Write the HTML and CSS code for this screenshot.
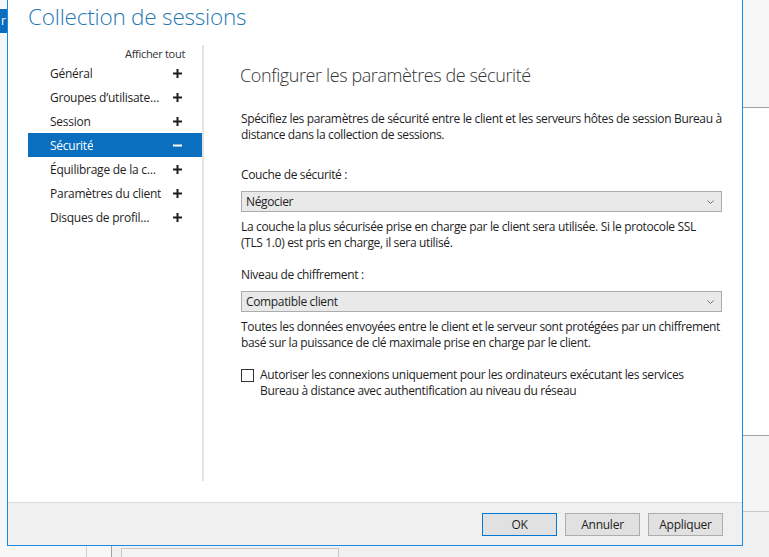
FILE: index.html
```html
<!DOCTYPE html>
<html lang="fr">
<head>
<meta charset="utf-8">
<title>Collection de sessions</title>
<link rel="stylesheet" href="styles.css">
</head>
<body>
<div class="desk">
  <div class="bg-left"><div class="bg-left-tab">r</div></div>
  <div class="dialog">
    <div class="dlg-main">
      <h1 class="title">Collection de sessions</h1>
      <div class="dlg-body">
        <nav class="nav">
          <div class="nav-all">Afficher tout</div>
          <ul class="nav-list">
            <li class="nav-item"><span class="nav-label">Général</span><svg class="ico" width="9" height="9" viewBox="0 0 9 9"><path d="M4.5 0v9M0 4.5h9"/></svg></li>
            <li class="nav-item"><span class="nav-label">Groupes d’utilisate…</span><svg class="ico" width="9" height="9" viewBox="0 0 9 9"><path d="M4.5 0v9M0 4.5h9"/></svg></li>
            <li class="nav-item"><span class="nav-label">Session</span><svg class="ico" width="9" height="9" viewBox="0 0 9 9"><path d="M4.5 0v9M0 4.5h9"/></svg></li>
            <li class="nav-item is-active"><span class="nav-label">Sécurité</span><svg class="ico" width="9" height="9" viewBox="0 0 9 9"><path d="M0 4.5h9"/></svg></li>
            <li class="nav-item"><span class="nav-label">Équilibrage de la c…</span><svg class="ico" width="9" height="9" viewBox="0 0 9 9"><path d="M4.5 0v9M0 4.5h9"/></svg></li>
            <li class="nav-item"><span class="nav-label">Paramètres du client</span><svg class="ico" width="9" height="9" viewBox="0 0 9 9"><path d="M4.5 0v9M0 4.5h9"/></svg></li>
            <li class="nav-item"><span class="nav-label">Disques de profil…</span><svg class="ico" width="9" height="9" viewBox="0 0 9 9"><path d="M4.5 0v9M0 4.5h9"/></svg></li>
          </ul>
        </nav>
        <section class="panel">
          <h2 class="panel-title">Configurer les paramètres de sécurité</h2>
          <p class="text intro">Spécifiez les paramètres de sécurité entre le client et les serveurs hôtes de session Bureau à distance dans la collection de sessions.</p>
          <div class="label first-label">Couche de sécurité :</div>
          <div class="select"><span>Négocier</span><svg class="chev" width="7" height="4" viewBox="0 0 7 4"><path d="M0.5 0.5l3 3l3-3"/></svg></div>
          <p class="text help">La couche la plus sécurisée prise en charge par le client sera utilisée. Si le protocole SSL (TLS&nbsp;1.0) est pris en charge, il sera utilisé.</p>
          <div class="label">Niveau de chiffrement :</div>
          <div class="select"><span>Compatible client</span><svg class="chev" width="7" height="4" viewBox="0 0 7 4"><path d="M0.5 0.5l3 3l3-3"/></svg></div>
          <p class="text help">Toutes les données envoyées entre le client et le serveur sont protégées par un chiffrement basé sur la puissance de clé maximale prise en charge par le client.</p>
          <label class="check"><span class="box"></span><span class="check-text">Autoriser les connexions uniquement pour les ordinateurs exécutant les services Bureau à distance avec authentification au niveau du réseau</span></label>
        </section>
      </div>
    </div>
    <div class="dlg-footer">
      <button class="btn btn-default">OK</button>
      <button class="btn">Annuler</button>
      <button class="btn">Appliquer</button>
    </div>
  </div>
  <div class="bg-right">
    <div class="r1"></div>
    <div class="r2"></div>
    <div class="r3"></div>
    <div class="r4"></div>
  </div>
  <div class="bg-bottom">
    <div class="b1"></div>
    <div class="b2"></div>
    <div class="b3"><div class="b3-box"></div></div>
  </div>
</div>
</body>
</html>
```
FILE: styles.css
```css
* { box-sizing: border-box; }
html, body { margin: 0; padding: 0; }
body {
  width: 769px;
  height: 557px;
  overflow: hidden;
  background: #f0f0f0;
  font-family: "Segoe UI", "Open Sans", "Noto Sans", sans-serif;
  font-size: 12px;
  letter-spacing: -0.35px;
  color: #1e1e1e;
}
.desk {
  display: grid;
  grid-template-columns: 7px 736px 26px;
  grid-template-rows: 546px 11px;
  width: 769px;
  height: 557px;
}
.bg-left {
  background: #f7f7f7;
  padding-top: 9px;
  overflow: hidden;
}
.bg-left-tab {
  height: 24px;
  background: #0b6dbd;
  color: #fff;
  font-size: 12px;
  line-height: 24px;
  text-indent: 1px;
  overflow: hidden;
}
.dialog {
  border: 1px solid #1c8ae0;
  border-top: none;
  display: flex;
  flex-direction: column;
  background: #fff;
}
.dlg-main {
  height: 502px;
  background: #fff;
}
.title {
  margin: 0;
  padding-left: 20px;
  height: 34px;
  line-height: 34px;
  font-size: 22.5px;
  font-weight: 300;
  letter-spacing: -0.2px;
  color: #1f78b4;
  white-space: nowrap;
}
.dlg-body {
  display: flex;
  margin-top: 11px;
  height: 436px;
}
.nav {
  width: 174px;
  margin-left: 20px;
  flex: none;
}
.nav-all {
  margin-top: 1px;
  height: 15px;
  line-height: 16px;
  font-size: 11px;
  letter-spacing: -0.3px;
  text-align: right;
  padding-right: 17px;
  color: #333;
}
.nav-list {
  list-style: none;
  margin: 0;
  padding: 0;
}
.nav-item {
  display: flex;
  align-items: center;
  justify-content: space-between;
  height: 24px;
  padding-left: 22px;
  padding-right: 20px;
  color: #1e1e1e;
  letter-spacing: -0.25px;
}
.nav-label {
  white-space: nowrap;
  overflow: hidden;
}
.ico { flex: none; }
.ico path { stroke: #1e1e1e; stroke-width: 2; fill: none; }
.nav-item.is-active {
  background: #0a6fbf;
  color: #fff;
}
.nav-item.is-active .ico path { stroke: #fff; }
.panel {
  flex: 1;
  border-left: 2px solid #e4e4e4;
  padding-left: 37px;
  padding-right: 20px;
}
.panel-title {
  margin: 17px 0 0 -1px;
  height: 26px;
  line-height: 26px;
  font-size: 18px;
  font-weight: 300;
  letter-spacing: -0.4px;
  color: #333;
  white-space: nowrap;
}
.text {
  margin: 0;
  line-height: 16px;
}
.intro { margin-top: 23px; }
.label {
  margin-top: 16px;
  line-height: 16px;
}
.first-label { margin-top: 24px; }
.select {
  margin-top: 8px;
  height: 21px;
  border: 1px solid #acacac;
  background: #e9e9e9;
  display: flex;
  align-items: center;
  justify-content: space-between;
  padding: 0 7px 0 4px;
}
.chev path { stroke: #707070; stroke-width: 1; fill: none; }
.help { margin-top: 7px; }
.check {
  display: flex;
  align-items: flex-start;
  margin-top: 16px;
  line-height: 16px;
}
.box {
  flex: none;
  width: 13px;
  height: 13px;
  margin-top: 2px;
  margin-right: 6px;
  border: 1px solid #333;
  background: #fff;
}
.dlg-footer {
  flex: 1;
  border-top: 1px solid #dcdcdc;
  background: #f0f0f0;
  display: flex;
  justify-content: flex-end;
  align-items: flex-start;
  gap: 8px;
  padding: 10px 19px 0 0;
}
.btn {
  width: 75px;
  height: 23px;
  border: 1px solid #adadad;
  background: #e1e1e1;
  font: inherit;
  letter-spacing: -0.25px;
  color: #1e1e1e;
  padding: 0;
}
.btn-default { border-color: #0078d7; }
.bg-right {
  display: flex;
  flex-direction: column;
}
.r1 { height: 108px; background: #f6f6f6; border-bottom: 1px solid #a0a0a0; }
.r2 { height: 328px; background: #fff; border-bottom: 1px solid #a0a0a0; }
.r3 { height: 76px; background: #f5f5f5; border-bottom: 1px solid #c8c8c8; }
.r4 { flex: 1; background: #f0f0f0; }
.bg-bottom {
  grid-column: 1 / 4;
  display: flex;
}
.b1 { width: 87px; background: #f7f7f7; border-right: 1px solid #cfcfcf; }
.b2 { width: 25px; background: #f7f7f7; border-right: 1px solid #a0a0a0; }
.b3 { flex: 1; background: #f0f0f0; padding: 2px 0 0 9px; }
.b3-box { width: 218px; height: 20px; border: 1px solid #c8c8c8; border-bottom: none; background: #f3f3f3; }
```
